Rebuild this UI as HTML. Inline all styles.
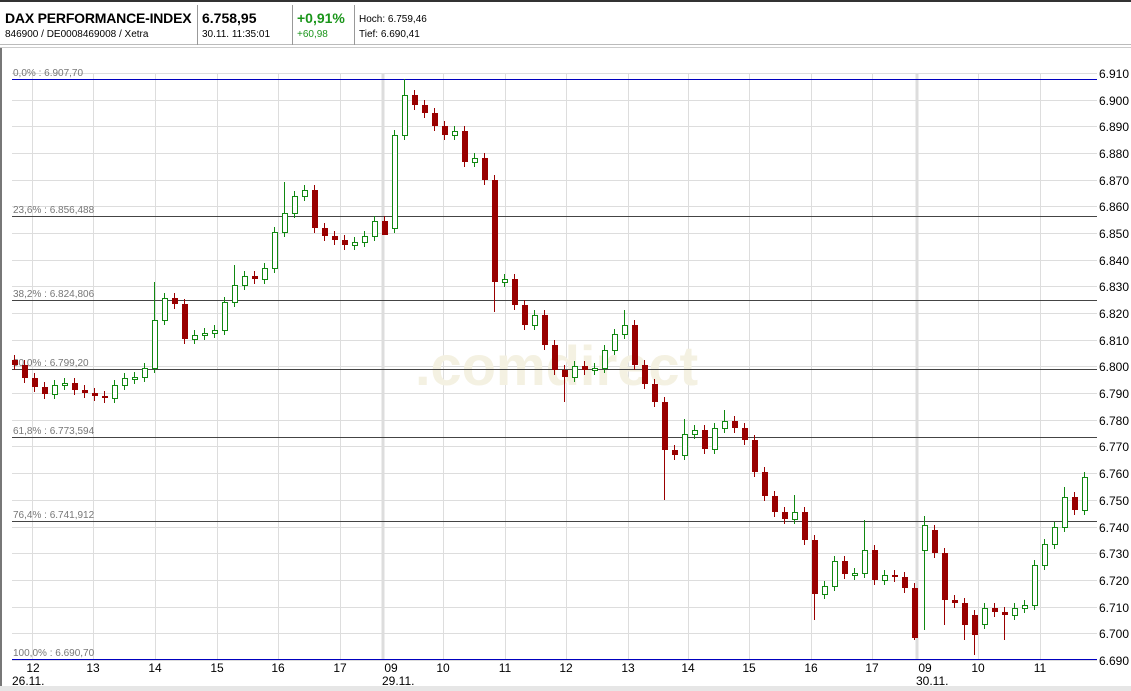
<!DOCTYPE html>
<html><head><meta charset="utf-8"><style>
body{margin:0;width:1131px;height:691px;overflow:hidden;background:#fff;font-family:"Liberation Sans",Arial,sans-serif;position:relative}
.hd{position:absolute;left:0;top:0;width:1131px;height:45px;border-top:2px solid #333;border-bottom:1px solid #bbb;box-sizing:border-box}
.t{position:absolute;white-space:nowrap}
.sep{position:absolute;top:3px;width:1px;height:40px;background:#999}
svg text{font-family:"Liberation Sans",Arial,sans-serif}
</style></head><body>
<div class="hd">
<div class="t" style="left:5px;top:8px;font-size:14px;font-weight:bold;letter-spacing:-0.2px">DAX PERFORMANCE-INDEX</div>
<div class="t" style="left:5px;top:27px;font-size:10px">846900 / DE0008469008 / Xetra</div>
<div class="sep" style="left:197px"></div>
<div class="t" style="left:202px;top:8px;font-size:14px;font-weight:bold">6.758,95</div>
<div class="t" style="left:202px;top:27px;font-size:10px">30.11. 11:35:01</div>
<div class="sep" style="left:292px"></div>
<div class="t" style="left:297px;top:8px;font-size:14px;font-weight:bold;color:#1a951a">+0,91%</div>
<div class="t" style="left:297px;top:27px;font-size:10px;color:#1a951a">+60,98</div>
<div class="sep" style="left:354px"></div>
<div class="t" style="left:359px;top:12px;font-size:10px">Hoch: 6.759,46</div>
<div class="t" style="left:359px;top:27px;font-size:10px">Tief: 6.690,41</div>
</div>
<div style="position:absolute;left:0;top:47px;width:2px;height:644px;background:#777"></div>
<div style="position:absolute;left:0;top:47px;width:1131px;height:1px;background:#ccc"></div>
<div style="position:absolute;left:0;top:686px;width:1131px;height:5px;background:#e6e6e6"></div>
<svg width="1131" height="691" style="position:absolute;left:0;top:0">
<path d="M12 73.5H1097M12 100.5H1097M12 126.5H1097M12 153.5H1097M12 180.5H1097M12 206.5H1097M12 233.5H1097M12 260.5H1097M12 286.5H1097M12 313.5H1097M12 340.5H1097M12 366.5H1097M12 393.5H1097M12 420.5H1097M12 446.5H1097M12 473.5H1097M12 500.5H1097M12 527.5H1097M12 553.5H1097M12 580.5H1097M12 607.5H1097M12 633.5H1097M12 660.5H1097
M32.5 73V660M93.5 73V660M155.5 73V660M217.5 73V660M278.5 73V660M340.5 73V660M443.5 73V660M505.5 73V660M566.5 73V660M628.5 73V660M688.5 73V660M749.5 73V660M811.5 73V660M872.5 73V660M978.5 73V660M1040.5 73V660" stroke="#ddd" fill="none"/>
<path d="M383 73V660M917 73V660" stroke="#ddd" stroke-width="3"/>
<g font-size="12">
<text x="1099" y="78">6.910</text><text x="1099" y="105">6.900</text><text x="1099" y="131">6.890</text><text x="1099" y="158">6.880</text><text x="1099" y="185">6.870</text><text x="1099" y="211">6.860</text><text x="1099" y="238">6.850</text><text x="1099" y="265">6.840</text><text x="1099" y="291">6.830</text><text x="1099" y="318">6.820</text><text x="1099" y="345">6.810</text><text x="1099" y="371">6.800</text><text x="1099" y="398">6.790</text><text x="1099" y="425">6.780</text><text x="1099" y="451">6.770</text><text x="1099" y="478">6.760</text><text x="1099" y="505">6.750</text><text x="1099" y="532">6.740</text><text x="1099" y="558">6.730</text><text x="1099" y="585">6.720</text><text x="1099" y="612">6.710</text><text x="1099" y="638">6.700</text><text x="1099" y="665">6.690</text>
<g text-anchor="middle"><text x="33" y="672">12</text><text x="93" y="672">13</text><text x="155" y="672">14</text><text x="217" y="672">15</text><text x="278" y="672">16</text><text x="340" y="672">17</text><text x="391" y="672">09</text><text x="443" y="672">10</text><text x="505" y="672">11</text><text x="566" y="672">12</text><text x="628" y="672">13</text><text x="688" y="672">14</text><text x="749" y="672">15</text><text x="811" y="672">16</text><text x="872" y="672">17</text><text x="925" y="672">09</text><text x="978" y="672">10</text><text x="1040" y="672">11</text></g>
<text x="12" y="685">26.11.</text><text x="382" y="685">29.11.</text><text x="916" y="685">30.11.</text>
</g>
<text x="415" y="385" font-size="56" font-weight="bold" fill="#f4f1e2">.comdirect</text>
<path d="M12 79.5H1097M12 659.5H1097" stroke="#0000c0"/>
<path d="M12 216.5H1097M12 300.5H1097M12 369.5H1097M12 437.5H1097M12 521.5H1097" stroke="#444"/>
<g font-size="10" fill="#777">
<text x="13" y="76">0,0% : 6.907,70</text><text x="13" y="213">23,6% : 6.856,488</text><text x="13" y="297">38,2% : 6.824,806</text><text x="13" y="366">50,0% : 6.799,20</text><text x="13" y="434">61,8% : 6.773,594</text><text x="13" y="518">76,4% : 6.741,912</text><text x="13" y="656">100,0% : 6.690,70</text>
</g>
<path stroke="#990000" fill="none" d="M14.5 355V370M24.5 360V383M34.5 373V392M44.5 382V399M74.5 378V395M84.5 385V398M94.5 388V401M104.5 391V403M174.5 293V309M184.5 299V344M254.5 271V284M314.5 185V233M324.5 223V241M334.5 231V245M344.5 235V250M384.5 216V233M414.5 90V110M424.5 100V118M434.5 108V131M444.5 121V140M464.5 126V167M484.5 153V185M494.5 175V312M514.5 274V310M524.5 300V330M544.5 310V350M554.5 340V375M564.5 365V402M584.5 361V375M634.5 320V370M644.5 360V389M654.5 379V407M664.5 397V500M674.5 445V460M704.5 425V454M734.5 416V433M744.5 423V445M754.5 435V477M764.5 467V501M774.5 491V517M784.5 507V524M804.5 507V545M814.5 535V620M844.5 556V579M874.5 545V585M894.5 570V582M904.5 572V593M914.5 583V640M934.5 525V558M944.5 548V625M954.5 595V608M964.5 598V640M974.5 610V655M994.5 603V617M1004.5 607V640M1074.5 492V515"/>
<path stroke="#118811" fill="none" d="M54.5 380V399M64.5 378V390M114.5 380V403M124.5 373V390M134.5 372V384M144.5 363V382M154.5 282V373M164.5 293V325M194.5 330V344M204.5 328V340M214.5 325V338M224.5 297V335M234.5 265V307M244.5 271V290M264.5 263V284M274.5 227V273M284.5 182V237M294.5 191V218M304.5 185V201M354.5 237V250M364.5 231V247M374.5 216V241M394.5 130V233M404.5 79V140M454.5 126V140M474.5 153V167M504.5 274V287M534.5 310V330M574.5 361V382M594.5 363V375M604.5 345V373M614.5 329V355M624.5 310V339M684.5 419V460M694.5 425V439M714.5 423V454M724.5 410V433M794.5 495V524M824.5 581V599M834.5 556V591M854.5 568V580M864.5 520V578M884.5 570V585M924.5 516V630M984.5 603V629M1014.5 603V620M1024.5 600V613M1034.5 560V610M1044.5 539V570M1054.5 522V549M1064.5 487V532M1084.5 472V515"/>
<g fill="#990000">
<rect x="12" y="360" width="6" height="5"/><rect x="22" y="365" width="6" height="13"/><rect x="32" y="378" width="6" height="9"/><rect x="42" y="387" width="6" height="7"/><rect x="72" y="383" width="6" height="7"/><rect x="82" y="390" width="6" height="3"/><rect x="92" y="393" width="6" height="3"/><rect x="102" y="396" width="6" height="2"/><rect x="172" y="298" width="6" height="6"/><rect x="182" y="304" width="6" height="35"/><rect x="252" y="276" width="6" height="3"/><rect x="312" y="190" width="6" height="38"/><rect x="322" y="228" width="6" height="8"/><rect x="332" y="236" width="6" height="4"/><rect x="342" y="240" width="6" height="5"/><rect x="382" y="221" width="6" height="14"/><rect x="412" y="95" width="6" height="10"/><rect x="422" y="105" width="6" height="8"/><rect x="432" y="113" width="6" height="13"/><rect x="442" y="126" width="6" height="9"/><rect x="462" y="131" width="6" height="31"/><rect x="482" y="158" width="6" height="22"/><rect x="492" y="180" width="6" height="102"/><rect x="512" y="279" width="6" height="26"/><rect x="522" y="305" width="6" height="20"/><rect x="542" y="315" width="6" height="30"/><rect x="552" y="345" width="6" height="25"/><rect x="562" y="370" width="6" height="7"/><rect x="582" y="366" width="6" height="4"/><rect x="632" y="325" width="6" height="40"/><rect x="642" y="365" width="6" height="19"/><rect x="652" y="384" width="6" height="18"/><rect x="662" y="402" width="6" height="48"/><rect x="672" y="450" width="6" height="5"/><rect x="702" y="430" width="6" height="19"/><rect x="732" y="421" width="6" height="7"/><rect x="742" y="428" width="6" height="12"/><rect x="752" y="440" width="6" height="32"/><rect x="762" y="472" width="6" height="24"/><rect x="772" y="496" width="6" height="16"/><rect x="782" y="512" width="6" height="7"/><rect x="802" y="512" width="6" height="28"/><rect x="812" y="540" width="6" height="54"/><rect x="842" y="561" width="6" height="13"/><rect x="872" y="550" width="6" height="30"/><rect x="892" y="575" width="6" height="2"/><rect x="902" y="577" width="6" height="11"/><rect x="912" y="588" width="6" height="50"/><rect x="932" y="530" width="6" height="23"/><rect x="942" y="553" width="6" height="47"/><rect x="952" y="600" width="6" height="3"/><rect x="962" y="603" width="6" height="22"/><rect x="972" y="615" width="6" height="20"/><rect x="992" y="608" width="6" height="4"/><rect x="1002" y="612" width="6" height="3"/><rect x="1072" y="497" width="6" height="13"/>
</g>
<g fill="#fff" stroke="#118811">
<rect x="52.5" y="385.5" width="5" height="9"/><rect x="62.5" y="383.5" width="5" height="2"/><rect x="112.5" y="385.5" width="5" height="13"/><rect x="122.5" y="378.5" width="5" height="7"/><rect x="132.5" y="377.5" width="5" height="2"/><rect x="142.5" y="368.5" width="5" height="9"/><rect x="152.5" y="320.5" width="5" height="48"/><rect x="162.5" y="298.5" width="5" height="22"/><rect x="192.5" y="335.5" width="5" height="4"/><rect x="202.5" y="333.5" width="5" height="2"/><rect x="212.5" y="330.5" width="5" height="3"/><rect x="222.5" y="302.5" width="5" height="28"/><rect x="232.5" y="285.5" width="5" height="17"/><rect x="242.5" y="276.5" width="5" height="9"/><rect x="262.5" y="268.5" width="5" height="11"/><rect x="272.5" y="232.5" width="5" height="36"/><rect x="282.5" y="213.5" width="5" height="19"/><rect x="292.5" y="196.5" width="5" height="17"/><rect x="302.5" y="190.5" width="5" height="6"/><rect x="352.5" y="242.5" width="5" height="3"/><rect x="362.5" y="236.5" width="5" height="6"/><rect x="372.5" y="221.5" width="5" height="15"/><rect x="392.5" y="135.5" width="5" height="93"/><rect x="402.5" y="95.5" width="5" height="40"/><rect x="452.5" y="131.5" width="5" height="4"/><rect x="472.5" y="158.5" width="5" height="4"/><rect x="502.5" y="279.5" width="5" height="3"/><rect x="532.5" y="315.5" width="5" height="10"/><rect x="572.5" y="366.5" width="5" height="11"/><rect x="592.5" y="368.5" width="5" height="2"/><rect x="602.5" y="350.5" width="5" height="18"/><rect x="612.5" y="334.5" width="5" height="16"/><rect x="622.5" y="325.5" width="5" height="9"/><rect x="682.5" y="434.5" width="5" height="21"/><rect x="692.5" y="430.5" width="5" height="4"/><rect x="712.5" y="428.5" width="5" height="21"/><rect x="722.5" y="421.5" width="5" height="7"/><rect x="792.5" y="512.5" width="5" height="7"/><rect x="822.5" y="586.5" width="5" height="8"/><rect x="832.5" y="561.5" width="5" height="25"/><rect x="852.5" y="573.5" width="5" height="2"/><rect x="862.5" y="550.5" width="5" height="23"/><rect x="882.5" y="575.5" width="5" height="5"/><rect x="922.5" y="525.5" width="5" height="25"/><rect x="982.5" y="608.5" width="5" height="16"/><rect x="1012.5" y="608.5" width="5" height="7"/><rect x="1022.5" y="605.5" width="5" height="3"/><rect x="1032.5" y="565.5" width="5" height="40"/><rect x="1042.5" y="544.5" width="5" height="21"/><rect x="1052.5" y="527.5" width="5" height="17"/><rect x="1062.5" y="497.5" width="5" height="30"/><rect x="1082.5" y="477.5" width="5" height="33"/>
</g>
</svg>
</body></html>
